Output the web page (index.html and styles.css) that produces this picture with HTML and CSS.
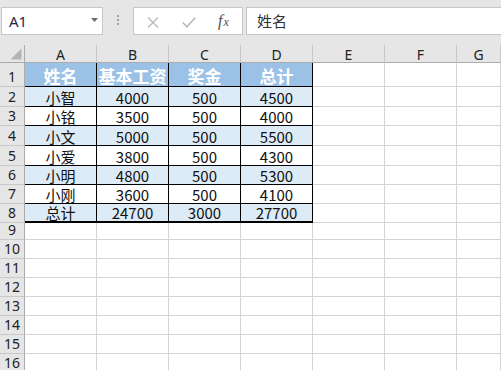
FILE: index.html
```html
<!DOCTYPE html>
<html lang="zh">
<head>
<meta charset="utf-8">
<title>Sheet</title>
<link rel="stylesheet" href="styles.css">
</head>
<body>
<div class="toolbar">
  <div class="namebox">
    <span class="nb-text">A1</span>
    <svg class="nb-arrow" width="7" height="4" viewBox="0 0 7 4"><path d="M0 0H7L3.5 4Z" fill="#6d6d6d"/></svg>
  </div>
  <div class="dots"><span></span><span></span><span></span></div>
  <div class="fxbox">
    <svg class="ic" width="12" height="11" viewBox="0 0 12 11"><path d="M1 0.5L11 10.5M11 0.5L1 10.5" stroke="#b9b9b9" stroke-width="1.3" fill="none"/></svg>
    <svg class="ic" width="14" height="11" viewBox="0 0 14 11"><path d="M0.8 5.5L4.8 9.8L13.2 0.8" stroke="#b9b9b9" stroke-width="1.6" fill="none"/></svg>
    <span class="fx"><span class="fx-f">f</span><span class="fx-x">x</span></span>
  </div>
  <div class="formula">姓名</div>
</div>
<div class="viewport">
<div class="sheet">
  <div class="corner"><svg width="25" height="18" viewBox="0 0 25 18"><path d="M21.5 3.5V14.5H10.5Z" fill="#b4b4b4"/></svg></div>
  <div class="ch">A</div><div class="ch">B</div><div class="ch">C</div><div class="ch">D</div><div class="ch">E</div><div class="ch">F</div><div class="ch">G</div>

  <div class="rh">1</div>
  <div class="d h">姓名</div><div class="d h">基本工资</div><div class="d h">奖金</div><div class="d h">总计</div>
  <div class="c"></div><div class="c"></div><div class="c"></div>

  <div class="rh">2</div>
  <div class="d z">小智</div><div class="d z">4000</div><div class="d z">500</div><div class="d z">4500</div>
  <div class="c"></div><div class="c"></div><div class="c"></div>

  <div class="rh">3</div>
  <div class="d">小铭</div><div class="d">3500</div><div class="d">500</div><div class="d">4000</div>
  <div class="c"></div><div class="c"></div><div class="c"></div>

  <div class="rh">4</div>
  <div class="d z">小文</div><div class="d z">5000</div><div class="d z">500</div><div class="d z">5500</div>
  <div class="c"></div><div class="c"></div><div class="c"></div>

  <div class="rh">5</div>
  <div class="d">小爱</div><div class="d">3800</div><div class="d">500</div><div class="d">4300</div>
  <div class="c"></div><div class="c"></div><div class="c"></div>

  <div class="rh">6</div>
  <div class="d z">小明</div><div class="d z">4800</div><div class="d z">500</div><div class="d z">5300</div>
  <div class="c"></div><div class="c"></div><div class="c"></div>

  <div class="rh">7</div>
  <div class="d">小刚</div><div class="d">3600</div><div class="d">500</div><div class="d">4100</div>
  <div class="c"></div><div class="c"></div><div class="c"></div>

  <div class="rh">8</div>
  <div class="d z last">总计</div><div class="d z last">24700</div><div class="d z last">3000</div><div class="d z last">27700</div>
  <div class="c"></div><div class="c"></div><div class="c"></div>

  <div class="rh">9</div><div class="c"></div><div class="c"></div><div class="c"></div><div class="c"></div><div class="c"></div><div class="c"></div><div class="c"></div>
  <div class="rh">10</div><div class="c"></div><div class="c"></div><div class="c"></div><div class="c"></div><div class="c"></div><div class="c"></div><div class="c"></div>
  <div class="rh">11</div><div class="c"></div><div class="c"></div><div class="c"></div><div class="c"></div><div class="c"></div><div class="c"></div><div class="c"></div>
  <div class="rh">12</div><div class="c"></div><div class="c"></div><div class="c"></div><div class="c"></div><div class="c"></div><div class="c"></div><div class="c"></div>
  <div class="rh">13</div><div class="c"></div><div class="c"></div><div class="c"></div><div class="c"></div><div class="c"></div><div class="c"></div><div class="c"></div>
  <div class="rh">14</div><div class="c"></div><div class="c"></div><div class="c"></div><div class="c"></div><div class="c"></div><div class="c"></div><div class="c"></div>
  <div class="rh">15</div><div class="c"></div><div class="c"></div><div class="c"></div><div class="c"></div><div class="c"></div><div class="c"></div><div class="c"></div>
  <div class="rh">16</div><div class="c"></div><div class="c"></div><div class="c"></div><div class="c"></div><div class="c"></div><div class="c"></div><div class="c"></div>
</div>
</div>
</body>
</html>
```
FILE: styles.css
```css
html, body {
  margin: 0;
  padding: 0;
  overflow: hidden;
  background: #ffffff;
}
body {
  width: 501px;
  height: 370px;
  font-family: "Noto Sans CJK SC", "Noto Sans", sans-serif;
  color: #111111;
}
.toolbar {
  height: 45px;
  box-sizing: border-box;
  padding-top: 7px;
  background: #e6e6e6;
  display: flex;
  align-items: flex-start;
  overflow: hidden;
}
.namebox {
  margin-left: 1px;
  width: 102px;
  height: 28px;
  box-sizing: border-box;
  border: 1px solid #c6c6c6;
  background: #ffffff;
  display: flex;
  align-items: center;
  justify-content: space-between;
  padding: 0 4px 0 7px;
}
.nb-text {
  font-family: "Noto Sans", sans-serif;
  font-size: 15px;
  color: #1e2a44;
  line-height: 1;
}
.nb-arrow {
  margin-top: -2px;
}
.dots {
  margin-left: 14px;
  margin-top: 8px;
  width: 3px;
  display: flex;
  flex-direction: column;
  gap: 2px;
}
.dots span {
  width: 2px;
  height: 2px;
  background: #a0a0a0;
}
.fxbox {
  margin-left: 13px;
  width: 110px;
  height: 28px;
  box-sizing: border-box;
  border: 1px solid #c6c6c6;
  background: #ffffff;
  display: flex;
  align-items: center;
  padding-left: 13px;
  gap: 23px;
}
.ic {
  display: block;
  margin-top: 2px;
}
.fx {
  font-family: "Liberation Serif", serif;
  font-style: italic;
  color: #505050;
  display: flex;
  align-items: baseline;
  margin-left: -1px;
}
.fx-f {
  font-size: 16px;
}
.fx-x {
  font-size: 12px;
  margin-left: 1px;
}
.formula {
  margin-left: 3px;
  flex: 1;
  height: 28px;
  box-sizing: border-box;
  border: 1px solid #c6c6c6;
  border-right: none;
  background: #ffffff;
  padding-left: 10px;
  font-size: 15px;
  line-height: 26px;
  color: #333333;
}
.viewport {
  width: 501px;
  height: 325px;
  overflow: hidden;
}
.sheet {
  display: grid;
  grid-template-columns: 25px repeat(6, 72px) 44px;
  grid-template-rows: 18px 24px 20px 19px 20px 20px 19px 19px 19px 17px repeat(7, 19px);
}
.sheet > div {
  box-sizing: border-box;
  white-space: nowrap;
}
.corner {
  background: #e6e6e6;
  border-right: 1px solid #ababab;
  border-bottom: 1px solid #ababab;
}
.corner svg {
  display: block;
}
.ch {
  background: #e6e6e6;
  border-right: 1px solid #c8c8c8;
  border-bottom: 1px solid #ababab;
  font-family: "Noto Sans", sans-serif;
  font-size: 14px;
  color: #222222;
  display: flex;
  align-items: center;
  justify-content: center;
  padding-top: 1px;
}
.ch:last-child {
  justify-content: flex-start;
  padding-left: 31px;
  border-right: none;
}
.rh {
  background: #e6e6e6;
  border-right: 1px solid #ababab;
  border-bottom: 1px solid #c8c8c8;
  font-family: "Noto Sans", sans-serif;
  font-size: 14px;
  line-height: 16px;
  color: #222222;
  display: flex;
  align-items: flex-end;
  justify-content: center;
  padding-bottom: 1px;
}
.c {
  border-right: 1px solid #d4d4d4;
  border-bottom: 1px solid #d4d4d4;
}
.d {
  border-right: 1px solid #000000;
  border-bottom: 1px solid #000000;
  font-size: 15px;
  line-height: 17px;
  display: flex;
  align-items: flex-end;
  justify-content: center;
  color: #111111;
}
.z {
  background: #ddebf7;
}
.h {
  background: #9bc2e6;
  color: #ffffff;
  font-weight: bold;
  font-size: 17px;
  line-height: 20px;
  overflow: hidden;
}
.last {
  border-bottom: 2px solid #000000;
  line-height: 16px;
}
```
